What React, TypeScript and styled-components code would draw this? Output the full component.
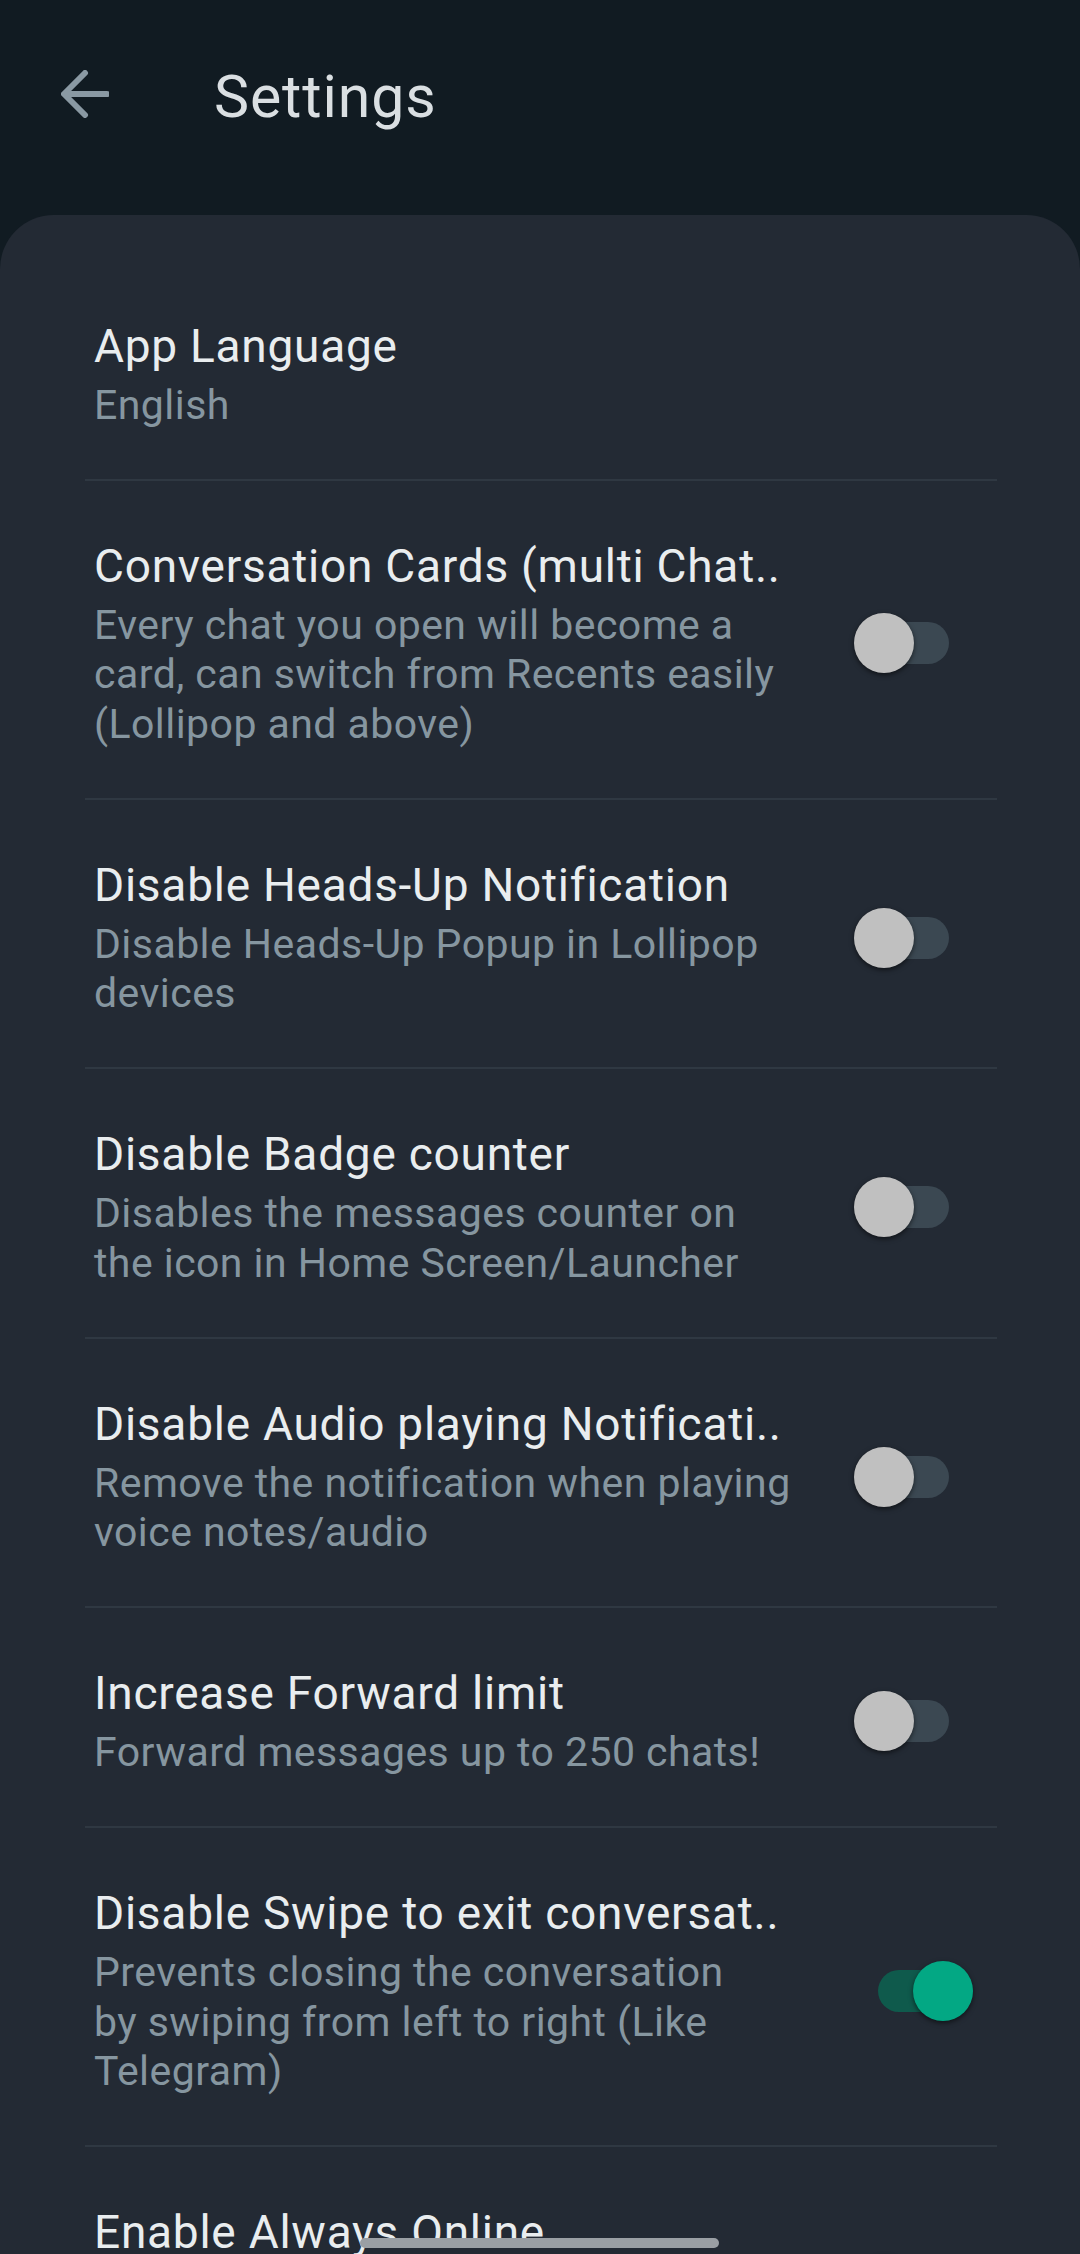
import React from "react";
import styled, { createGlobalStyle } from "styled-components";

const GlobalStyle = createGlobalStyle`
  html, body {
    margin: 0;
    padding: 0;
    background: #111b22;
  }
  body {
    font-family: Roboto, "Noto Sans", "Liberation Sans", sans-serif;
    -webkit-font-smoothing: antialiased;
  }
`;

const Page = styled.div`
  position: relative;
  width: 1080px;
  height: 2254px;
  overflow: hidden;
  background: #111b22;
  display: flex;
  flex-direction: column;
`;

const Header = styled.header`
  height: 215px;
  box-sizing: border-box;
  padding: 0 0 27px 61px;
  display: flex;
  align-items: center;
  gap: 105px;
  flex-shrink: 0;
`;

const BackButton = styled.button`
  width: 48px;
  height: 48px;
  padding: 0;
  border: none;
  background: transparent;
  display: flex;
  align-items: center;
  justify-content: center;
  color: #8a99a3;
`;

const Title = styled.h1`
  margin: 6px 0 0;
  font-size: 59px;
  line-height: 70px;
  font-weight: 400;
  color: #dadfe2;
  letter-spacing: 0.9px;
`;

const Card = styled.main`
  flex: 1;
  background: #232a34;
  border-radius: 54px 54px 0 0;
  padding: 45.5px 83px 0 85px;
  display: flex;
  flex-direction: column;
`;

const Row = styled.div`
  display: flex;
  align-items: center;
  padding: 57px 0 48.5px 9px;
  border-bottom: 2px solid #2f3842;
`;

const TextCol = styled.div<{ $minLines?: number }>`
  flex: 1;
  display: flex;
  flex-direction: column;
  gap: 7px;
  min-height: ${(p) => (p.$minLines ? 63 + p.$minLines * 49.5 : 0)}px;
`;

const RowTitle = styled.div`
  font-size: 46px;
  line-height: 56px;
  color: #e9edef;
  letter-spacing: 0.75px;
  white-space: nowrap;
`;

const RowSub = styled.div`
  font-size: 41px;
  line-height: 49.5px;
  color: #8696a0;
  letter-spacing: 0.45px;
`;

const SubLine = styled.span`
  display: block;
  white-space: nowrap;
`;

const SwitchWrap = styled.div<{ $on: boolean }>`
  position: relative;
  width: 95px;
  height: 60px;
  flex-shrink: 0;
  margin-right: ${(p) => (p.$on ? 24 : 48)}px;
`;

const Track = styled.div<{ $on: boolean }>`
  position: absolute;
  left: 0;
  right: 0;
  top: 9px;
  height: 42px;
  border-radius: 21px;
  background: ${(p) => (p.$on ? "#0f5a4c" : "#3b4852")};
`;

const Knob = styled.div<{ $on: boolean }>`
  position: absolute;
  top: 0;
  ${(p) => (p.$on ? "right: 0;" : "left: 0;")}
  width: 60px;
  height: 60px;
  border-radius: 50%;
  background: ${(p) => (p.$on ? "#03a884" : "#c0c0c0")};
  box-shadow: 0 2px 5px rgba(0, 0, 0, 0.55);
`;

const HomeIndicator = styled.div`
  position: absolute;
  left: 50%;
  bottom: 6px;
  width: 359px;
  height: 10px;
  margin-left: -180px;
  border-radius: 5px;
  background: #9a9fa4;
`;

const Switch: React.FC<{ on: boolean }> = ({ on }) => (
  <SwitchWrap $on={on}>
    <Track $on={on} />
    <Knob $on={on} />
  </SwitchWrap>
);

type Item = {
  title: string;
  sub?: string[];
  toggle?: boolean;
  minLines?: number;
};

const items: Item[] = [
  { title: "App Language", sub: ["English"] },
  {
    title: "Conversation Cards (multi Chat..",
    sub: [
      "Every chat you open will become a",
      "card, can switch from Recents easily",
      "(Lollipop and above)",
    ],
    toggle: false,
  },
  {
    title: "Disable Heads-Up Notification",
    sub: ["Disable Heads-Up Popup in Lollipop", "devices"],
    toggle: false,
  },
  {
    title: "Disable Badge counter",
    sub: ["Disables the messages counter on", "the icon in Home Screen/Launcher"],
    toggle: false,
  },
  {
    title: "Disable Audio playing Notificati..",
    sub: ["Remove the notification when playing", "voice notes/audio"],
    toggle: false,
  },
  {
    title: "Increase Forward limit",
    sub: ["Forward messages up to 250 chats!"],
    toggle: false,
  },
  {
    title: "Disable Swipe to exit conversat..",
    sub: [
      "Prevents closing the conversation",
      "by swiping from left to right (Like",
      "Telegram)",
    ],
    toggle: true,
  },
  { title: "Enable Always Online", toggle: false, minLines: 2 },
];

export default function App() {
  return (
    <>
      <GlobalStyle />
      <Page>
        <Header>
          <BackButton aria-label="Back">
            <svg width="48" height="48" viewBox="0 0 48 48" fill="none">
              <path
                d="M46 24H4M24 3L3 24l21 21"
                stroke="currentColor"
                strokeWidth="6"
                strokeLinecap="round"
                strokeLinejoin="round"
              />
            </svg>
          </BackButton>
          <Title>Settings</Title>
        </Header>
        <Card>
          {items.map((it) => (
            <Row key={it.title}>
              <TextCol $minLines={it.minLines}>
                <RowTitle>{it.title}</RowTitle>
                {it.sub && (
                  <RowSub>
                    {it.sub.map((l) => (
                      <SubLine key={l}>{l}</SubLine>
                    ))}
                  </RowSub>
                )}
              </TextCol>
              {it.toggle !== undefined && <Switch on={it.toggle} />}
            </Row>
          ))}
        </Card>
        <HomeIndicator />
      </Page>
    </>
  );
}
